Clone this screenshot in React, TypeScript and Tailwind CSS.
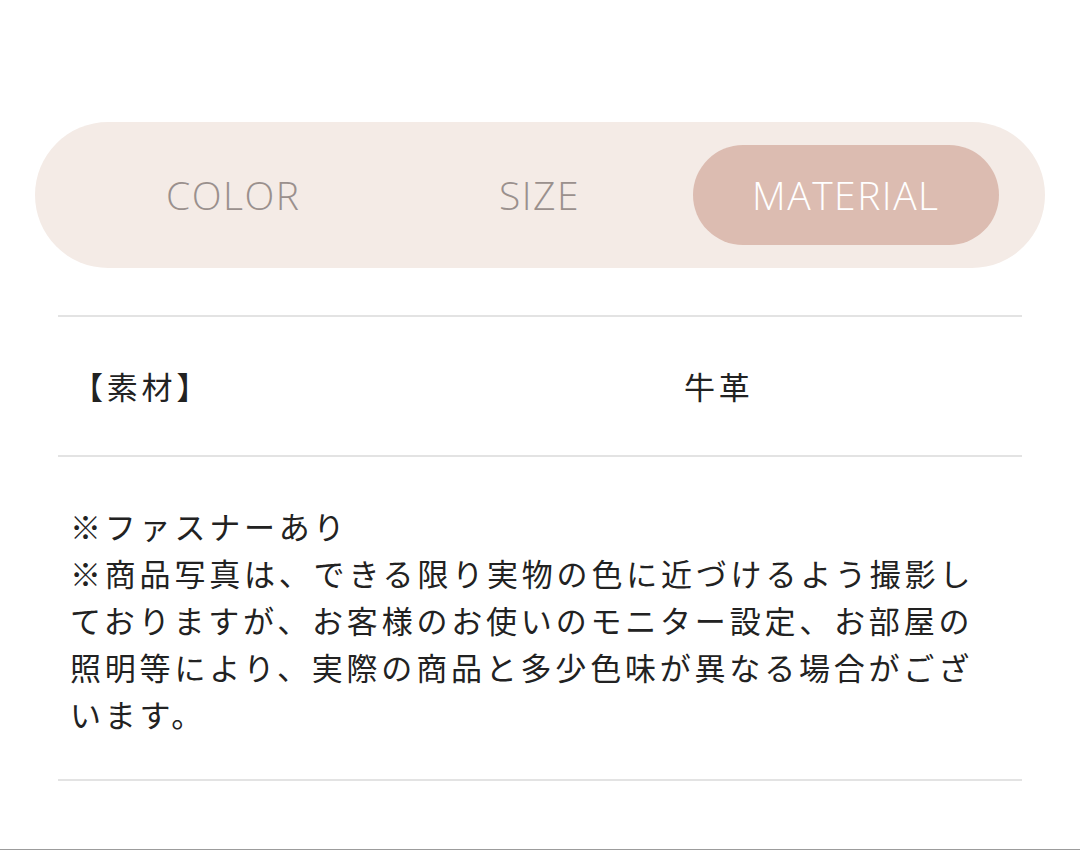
import { useState } from 'react';

const tabs = ['COLOR', 'SIZE', 'MATERIAL'];

const jp = "font-['Noto_Sans_CJK_JP','Noto_Sans',sans-serif]";

export default function App() {
  const [active, setActive] = useState('MATERIAL');

  return (
    <div className="h-[850px] bg-white flex flex-col overflow-hidden">
      {/* Tabs */}
      <div className="pt-[122px] px-[35px]">
        <div className="rounded-full bg-[#f4ebe6] py-[23px] pl-[45px] pr-[46px] grid grid-cols-3">
          {tabs.map((t) => (
            <button
              key={t}
              type="button"
              onClick={() => setActive(t)}
              className={`h-[100px] rounded-full flex items-center justify-center font-['Open_Sans',sans-serif] font-light text-[39px] tracking-[1.5px] ${
                active === t ? 'bg-[#dcbcb1] text-white' : 'text-[#9a908d]'
              }`}
            >
              {t}
            </button>
          ))}
        </div>
      </div>

      {/* Table */}
      <div className={`mx-[58px] mt-[47px] border-t-2 border-[#e3e3e3] text-[#222] ${jp}`}>
        <div className="grid grid-cols-[626px_1fr] items-center h-[138px] text-[31px] tracking-[3.8px]">
          <div className="pl-[14px]">【素材】</div>
          <div>牛革</div>
        </div>
        <div className="border-t-2 border-[#e3e3e3] pt-[45px] pb-[42px] pl-[12px] pr-[40px]">
          <p className="text-[31px] leading-[47px] tracking-[3.8px]">
            ※ファスナーあり
            <br />
            ※商品写真は、できる限り実物の色に近づけるよう撮影しておりますが、お客様のお使いのモニター設定、お部屋の照明等により、実際の商品と多少色味が異なる場合がございます。
          </p>
        </div>
        <div className="border-t-2 border-[#e3e3e3]" />
      </div>

      <div className="mt-auto h-px bg-[#9c9c9c]" />
    </div>
  );
}
